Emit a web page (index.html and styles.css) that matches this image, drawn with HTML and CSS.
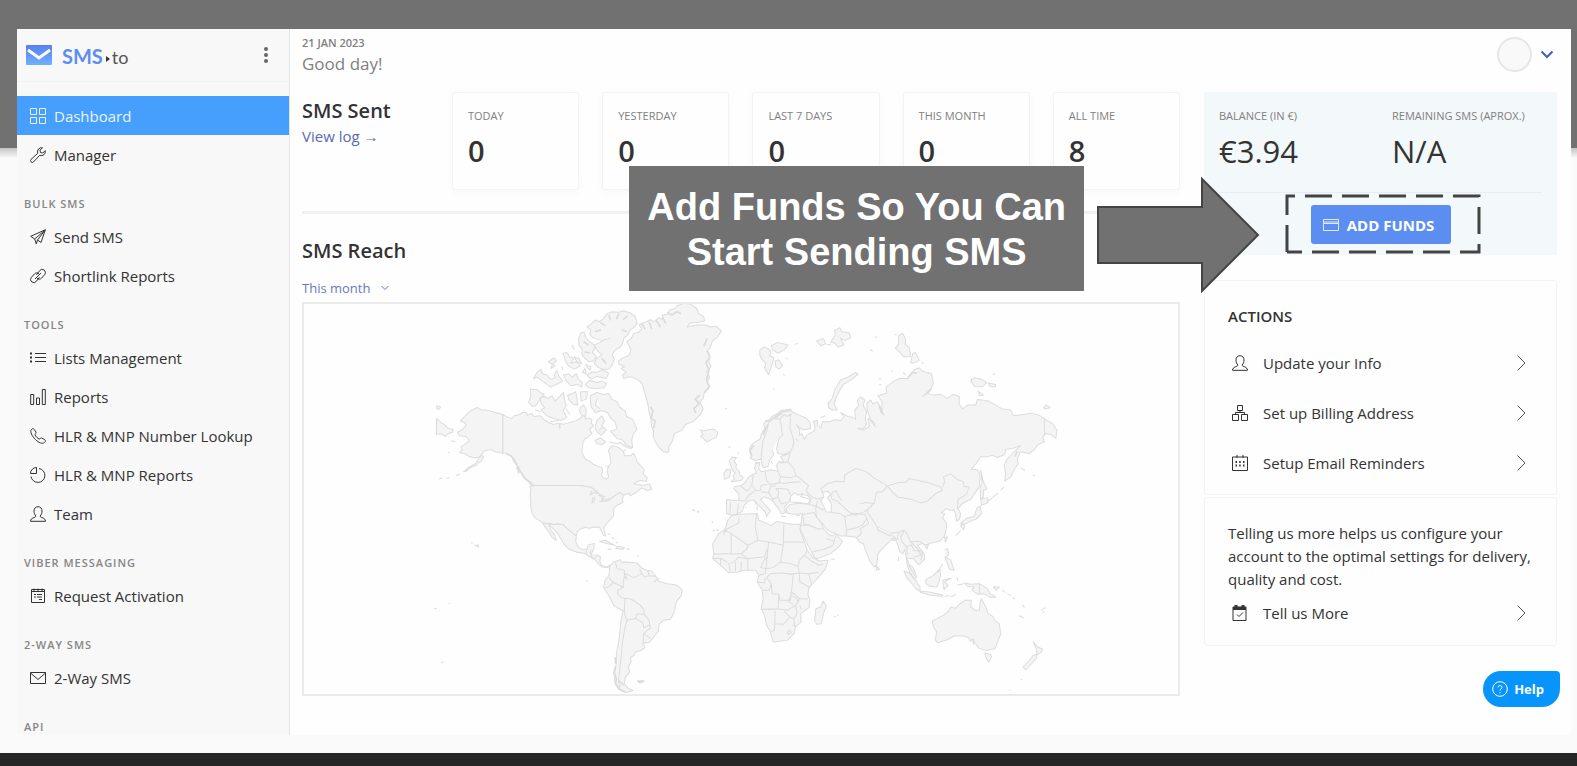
FILE: index.html
```html
<!DOCTYPE html>
<html lang="en">
<head>
	<title>SMS.to Dashboard</title>
	<meta charset="utf-8">
	<link rel="stylesheet" href="styles.css">
</head>
<body>
<div class="app">
	<aside class="sidebar">
		<div class="brand">
			<svg class="brand-mark" viewBox="0 0 26 20">
				<defs><linearGradient id="mark" x1="0" y1="0" x2="0" y2="1"><stop offset="0" stop-color="#5480f0"/><stop offset="1" stop-color="#6fb0fb"/></linearGradient></defs>
				<rect width="26" height="20" rx="1" fill="url(#mark)"/>
				<path d="M2 5l11 8 11-8" fill="none" stroke="#fff" stroke-width="3"/>
			</svg>
			<span class="brand-sms">SMS</span><svg class="brand-dot" viewBox="0 0 4 6"><path d="M0 0l4 3-4 3z"/></svg><span class="brand-to">to</span>
			<button class="dots" aria-label="Menu"><svg viewBox="0 0 4 16"><circle cx="2" cy="2" r="2"/><circle cx="2" cy="8" r="2"/><circle cx="2" cy="14" r="2"/></svg></button>
		</div>
		<nav class="nav">
			<a href="#" class="active"><svg class="icon" viewBox="0 0 16 16"><path d="M.5.5h6v6h-6zM9.500.5h6v6h-6zM.5 9.500h6v6h-6zM9.500 9.500h6v6h-6z"/></svg>Dashboard</a>
			<a href="#"><svg class="icon" viewBox="0 0 16 16"><path d="M12.500.8a4 4 0 0 0-4.700 5.400L1 12.400a1.700 1.700 0 0 0 2.500 2.500L9.700 8.300a4 4 0 0 0 5.500-4.700L12.800 6l-2.300-.5L10 3.200z"/></svg>Manager</a>
			<h3>BULK SMS</h3>
			<a href="#"><svg class="icon" viewBox="0 0 16 16"><path d="M15.300.8L.7 7.300l4 2.700L15.300.8 11 13.500 7.500 11l-1.200 4-1.600-5M15.300.8L7.500 11"/></svg>Send SMS</a>
			<a href="#"><svg class="icon" viewBox="0 0 16 16"><path d="M6.500 6.800l3.200-4.200a3.200 3.200 0 0 1 5 4l-3.200 3.500a3 3 0 0 1-4.500 0M9.500 9.200l-3.200 4.200a3.200 3.200 0 0 1-5-4l3.200-3.500a3 3 0 0 1 4.500 0M5 11l6-6"/></svg>Shortlink Reports</a>
			<h3>TOOLS</h3>
			<a href="#"><svg class="icon" viewBox="0 0 16 16"><path d="M5 3.500h11M5 7.500h11M5 11.500h11"/><path d="M0 3.500h2M0 7.500h2M0 11.500h2" stroke-width="2"/></svg>Lists Management</a>
			<a href="#"><svg class="icon" viewBox="0 0 16 16"><path d="M.7 5.500h3v10h-3zM6.500 9h3v6.500h-3zM12.300.5h3v15h-3z"/></svg>Reports</a>
			<a href="#"><svg class="icon" viewBox="0 0 16 16"><path d="M1.500 1.500C2.500.3 3.500.3 4.300 1.500L6 4.200C6.500 5.200 4.800 6 5 6.800c.5 1.500 2.700 3.700 4.200 4.200.8.200 1.600-1.500 2.600-1l3 1.700c1 .8.800 1.800-.4 2.800-2 1.800-5.600.3-9-3S-.3 3.500 1.500 1.500z"/></svg>HLR &amp; MNP Number Lookup</a>
			<a href="#"><svg class="icon" viewBox="0 0 16 16"><path d="M9 1.500a7 7 0 1 1-8 8M6.500.5v6h-6a6 6 0 0 1 6-6z"/></svg>HLR &amp; MNP Reports</a>
			<a href="#"><svg class="icon" viewBox="0 0 16 16"><path d="M6 10c-1.500-1.200-2-3-2-5 0-2.500 1.500-4.300 4-4.300S12 2.500 12 5c0 2-.5 3.800-2 5 .5 2 5.500 1.500 5.500 5.300H.5C.5 11.500 5.500 12 6 10z"/></svg>Team</a>
			<h3>VIBER MESSAGING</h3>
			<a href="#"><svg class="icon" viewBox="0 0 16 16"><path d="M1.500 1.500h13v13h-13zM1.500 3.500h13M4 .5v3M8 .5v3M12 .5v3M4 6.500h2M7 6.500h5M4 9h2M7 9h5M9 11.500h3"/></svg>Request Activation</a>
			<h3>2-WAY SMS</h3>
			<a href="#"><svg class="icon" viewBox="0 0 16 16"><path d="M.5 2.500h15v11H.5zM.5 3L8 9.500 15.500 3"/></svg>2-Way SMS</a>
			<h3>API</h3>
		</nav>
	</aside>

	<main class="main">
		<header class="topbar">
			<div>
				<div class="date">21 JAN 2023</div>
				<div class="greeting">Good day!</div>
			</div>
			<button class="profile" aria-label="Account"><span class="avatar"></span><svg viewBox="0 0 14 9"><path d="M1.500 1.500L7 7l5.500-5.500"/></svg></button>
		</header>

		<div class="columns">
			<section class="left">
				<div class="stats">
					<div class="stats-title">
						<h2>SMS Sent</h2>
						<a href="#">View log →</a>
					</div>
					<div class="cards">
						<div class="card"><span>TODAY</span><b>0</b></div>
						<div class="card"><span>YESTERDAY</span><b>0</b></div>
						<div class="card"><span>LAST 7 DAYS</span><b>0</b></div>
						<div class="card"><span>THIS MONTH</span><b>0</b></div>
						<div class="card"><span>ALL TIME</span><b>8</b></div>
					</div>
				</div>

				<h2 class="reach">SMS Reach</h2>
				<div class="period">
					<select aria-label="Period"><option>This month</option></select>
					<svg viewBox="0 0 8 6"><path d="M.5 1L4 4.500 7.500 1"/></svg>
				</div>

				<div class="map">
					<svg viewBox="-348 27 2619 1170">
						<!-- North America, Greenland -->
						<g>
							<path d="M248 358L225 352 200 345 185 345 170 337 150 348 135 362 120 377 133 382 138 390 128 402 112 412 118 422 136 424 142 430 148 436 134 448 122 455 126 464 118 472 135 476 148 484 160 488 176 486 185 478 190 468 200 465 212 463 225 470 248 474z"/>
							<path d="M185 480L190 486 182 500 175 502 168 510 150 518 138 528 130 530 146 516 165 506 176 490zM120 536l-12 5M88 548l-9 1M66 549l-9 2M50 332l12 4-6 7-6-3zM49 370L60 380 74 390 84 400 100 402 96 412 84 415 76 424 62 416 49 418zM92 437l12 3M84 472l5-1"/>
							<path d="M248 358L262 366 275 370 282 362 300 358 306 352 318 352 322 360 335 355 340 364 360 362 372 374 385 382 400 388 414 384 430 387 450 382 470 375 480 370 490 360 497 372 506 368 515 374 512 384 520 392 508 402 515 415 500 428 492 432 488 445 484 470 495 492 508 498 520 508 545 518 547 530 543 540 550 550 558 552 565 545 560 528 565 512 572 505 568 480 564 465 575 452 590 455 600 460 610 470 612 482 628 482 640 475 646 488 650 500 662 512 672 525 668 535 680 548 678 558 660 556 640 565 650 568 670 570 688 566 694 582 680 586 664 578 650 590 630 602 626 594 610 600 598 592 570 610 545 618 550 605 535 596 530 590 515 578 500 574 480 571 343 571 332 560 320 555 310 540 300 530 295 515 280 500 275 485 260 475 248 474z"/>
							<path class="coast" d="M258 476L272 482 284 496 292 512 300 528 312 548 326 560 338 575M290 515l6 20M418 384v16M508 575l12 14 14 6"/>
							<path d="M343 571H480L500 574 515 578 522 586 535 596 552 604 545 618 570 610 598 592 610 600 606 612 608 622 590 630 578 642 580 660 572 672 560 683 552 694 551 704 556 722 549 720 542 705 538 696 520 695 508 699 495 697 478 702 470 710 468 722 455 712 440 700 428 688 414 686 400 688 385 684 368 683 345 668 336 655 332 640 330 600 332 585 330 574z"/>
							<path d="M514 586l-4 14 10-8 12 4M518 605l-3 18 5-2 4-16M534 600l12 4-2 14-8 2M552 620l20-6"/>
							<path d="M740 472L730 470 720 462 712 452 705 440 698 425 700 410 694 395 690 365 686 350 683 330 678 310 672 290 666 268 655 255 640 248 630 245 610 250 606 240 618 232 602 220 612 215 596 208 594 198 605 190 625 182 632 165 620 140 632 132 640 115 655 112 664 102 656 90 672 82 690 74 700 80 716 68 728 74 726 60 742 58 748 44 762 42 770 32 790 25 812 28 830 42 834 56 850 65 852 78 835 82 808 84 800 96 830 90 856 90 870 96 888 94 903 108 892 124 876 138 868 160 858 168 868 180 865 200 872 215 858 230 868 246 860 262 866 278 852 290 848 310 838 320 848 340 840 358 820 378 795 388 785 405 762 415 755 440 745 455 745 470z"/>
							<path class="coast" d="M664 86l10 16M686 80l8 22M706 74l14 22M726 66l10 20M740 52l14 8 16-10 12 6M862 168l6 20-12 16 10 20-8 30 8 20-14 20M838 300l-14 12 12 14-16 14 6 14M690 335l8 12-6 22 12 8-4 22M860 130l-10 24"/>
							<path d="M500 95L512 88 525 75 538 80 550 70 560 56 575 50 595 52 610 47 630 54 645 65 650 85 640 98 630 104 622 120 610 130 606 148 600 155 584 166 575 180 582 192 576 208 568 220 552 224 535 218 522 206 528 190 545 180 530 165 520 150 535 145 550 135 570 130 545 136 520 130 508 118 512 106z"/>
							<path d="M475 130L482 114 492 112 496 126 506 138 520 148 524 160 516 172 528 184 520 198 505 200 492 188 484 176 486 162 476 152z"/>
							<path class="coast" d="M540 82l14 10M566 60l4 16M596 56l-8 16M622 62l-14 12M620 110l-16-6M524 110l18-6M490 140l14 10M492 170l16 4M544 190l14 16"/>
							<path d="M495 268L508 256 530 262 545 258 558 266 552 278 525 280 505 278zM500 240L515 230 530 232 545 224 565 234 558 250 530 244 512 252zM428 175L440 172 448 186 460 190 452 204 468 200 480 212 462 222 446 214 436 200 432 186zM384 200L402 188 408 198 398 206 404 214 392 220 396 208zM340 250L350 232 362 222 366 236 380 240 390 252 404 250 402 238 410 226 416 244 428 258 412 266 392 276 372 262 350 246zM430 240L446 236 456 246 468 236 474 252 486 262 484 276 470 268 452 272 438 258zM455 150l7 14M462 186l14 4 8 16-14-6zM424 214l4 10M486 232l8-12 4 18zM496 208l16 6-4 12z"/>
							<path d="M330 282L350 284 360 292 372 298 358 314 346 332 336 334 325 322 332 302zM358 310L372 304 385 310 394 302 405 318 416 306 430 292 432 312 438 332 428 346 440 366 424 376 400 370 380 362 362 344 374 338 364 328zM442 300L456 296 466 290 470 308 472 330 460 328 446 314zM480 290L502 290 498 312 482 318zM480 336l10-6 8 14-2 20-12-4-6-12zM345 344l16 6M388 380l28-4M436 340l14 18"/>
							<path d="M510 302L530 292 548 298 565 295 574 312 590 320 598 336 615 348 618 364 636 372 650 402 638 418 634 436 637 458 620 452 606 434 590 430 570 408 590 402 584 380 570 368 562 352 545 346 525 352 512 335zM530 310l-4 20 14 12M524 400L530 376 545 362 552 378 544 392 558 404 542 420 532 412zM524 436L540 428 556 440 545 448 530 446zM568 440l20 6 12-4 22 16 12 2M608 470l8-8M556 512l6 2M548 396l-12 10"/>
							<path d="M840 404L850 408 862 404 880 402 892 412 888 426 876 432 860 440 850 432 840 424 848 418zM914 342l6-3M924 454l5 3M934 486L948 487 940 498 948 508 946 518 956 528 958 540 968 546 962 556 946 558 932 560 942 550 938 542 944 532 936 526 930 508 926 498zM910 534L918 522 930 524 928 545 912 552zM952 472l2 5"/>
						</g>
						<!-- Europe and Asia -->
						<g transform="translate(960)">
							<path d="M30 490L34 478 27 462 32 450 45 440 60 430 62 416 72 402 70 384 84 376 95 364 110 356 120 346 135 344 150 342 155 350 175 360 195 368 208 380 210 400 190 404 176 398 168 388 178 405 176 420 184 416 192 432 200 420 212 412 220 408 224 398 218 378 232 376 230 390 242 398 245 380 265 380 285 374 300 376 310 364 300 352 322 364 335 366 345 372 342 345 354 332 350 316 360 305 372 315 368 330 378 350 374 368 378 388 366 404 352 400 372 402 386 394 382 370 398 380 404 394 390 376 380 345 378 325 390 315 396 326 410 320 422 340 420 352 430 360 424 346 424 320 412 302 438 294 436 276 445 270 460 258 475 250 500 250 514 236 520 225 535 218 545 228 572 236 578 265 570 284 545 304 560 294 576 300 600 298 620 310 638 298 656 304 655 325 665 342 680 330 705 330 710 313 740 317 765 330 785 342 810 345 818 362 850 358 870 354 895 360 912 372 935 385 948 405 945 430 930 418 914 416 905 425 910 440 890 450 880 464 865 475 838 470 830 490 832 506 822 520 810 545 792 558 794 535 790 510 800 490 812 478 826 464 838 452 815 460 795 462 792 478 770 487 755 480 740 485 720 485 706 505 692 522 708 524 715 530 718 550 715 575 690 612 665 625 652 640 660 656 656 672 648 678 644 655 640 644 628 645 615 640 602 652 612 656 605 668 618 684 616 705 610 725 595 738 565 745 556 752 545 745 530 750 550 775 552 792 535 808 528 802 518 790 506 790 498 786 504 806 518 818 528 845 520 850 508 832 500 812 498 795 492 762 486 776 478 770 470 745 465 735 450 735 430 755 412 775 408 810 400 815 388 798 378 775 368 745 358 742 345 725 318 722 300 722 285 715 270 710 258 702 248 688 240 680 250 702 262 716 275 722 285 716 305 738 295 755 270 775 225 792 215 775 200 745 185 715 178 700 180 690 183 672 185 655 165 658 140 654 136 640 148 628 175 624 205 627 212 612 200 600 178 598 165 602 150 606 145 620 130 638 136 652 122 656 114 640 100 620 85 610 70 605 60 612 78 634 90 646 78 664 74 650 50 626 38 614 22 618 10 632 6 648 -10 656 -25 660 -42 655 -42 613 -22 616 -5 615 -5 596 -20 580 -16 574 0 572 15 562 22 548 36 538 48 534 42 518 48 502 58 502 54 520 62 530 90 524 112 528 108 512 114 500 130 500 120 484 148 476 160 445 150 470 130 478 112 474 108 462 115 430 128 418 118 412 108 430 92 448 94 465 100 478 88 494 82 514 68 518 62 492 45 496z"/>
							<path class="coast" d="M34 484l-6-18 12-16M68 420l8-22 20-26 30-22 24-4M74 378l22-4 28-20M500 250l14-18 14 2M560 294l10-12M830 468l-8 16M415 330l8 22"/>
							<path d="M66 515L62 490 66 440 78 410 85 380 100 370 118 372 122 388 124 412M118 372L130 358 140 364 152 356M150 370L148 400 158 430 160 445M152 356l-4 14M148 476L142 500 160 520 166 542 180 550 204 572 196 588M142 500L118 504M112 528L120 545 116 562 90 570 78 556 74 530M120 545L150 548 166 542M116 562L130 565 150 562 180 560M38 540L34 570 46 586 60 585 62 570 80 568M0 572L20 588 34 570M-5 615L14 618 24 600 46 586M62 590L84 592 90 575 106 572M84 592L96 612 112 606 114 588 106 580 120 580 142 582 150 600M112 606l10 20 16-4M96 612l6 14 14 14M-10 656L-6 625M-30 622l-2 34"/>
							<path d="M196 588L214 605 232 612 248 606M250 600L240 580 262 565 285 558 310 560 312 540 345 520 378 530 400 548 440 572 425 590 408 590 400 625 375 622 350 628 335 640 310 625 292 600 288 588 275 590 272 610M440 572L475 562 495 562 505 550 560 562 600 575 605 585 585 595 560 618 540 623 510 612 470 605 455 590zM605 575L612 560 608 545 630 536 648 552 668 560 670 575 685 575 678 595 665 605 652 612 650 640M400 625L382 638 380 650 392 668 410 695 450 714 478 710 490 705 500 718 510 740 535 738 548 745"/>
							<path d="M272 610L290 618 325 650 345 660 370 650 395 632M270 650L300 656 312 664 345 655 375 658 378 670 365 690 345 698 318 704 312 664M318 704L316 722M378 670L384 685 360 700 362 715 350 726M186 658L220 652 228 665 240 680M230 618L225 640 228 665M205 627L228 634 250 645M186 658L190 685 205 690 235 702 245 700M182 690L205 690M215 770L250 762 278 750 280 738 258 730M280 738l5-16M410 695L412 705 450 722 452 714M450 730L470 732 474 712M455 720l12 14M490 705L480 725 484 740 498 755 500 780M498 755L512 748 520 765 535 768 540 780 520 785M510 740L525 755 545 775 540 795M910 372L912 420"/>
							<path class="sea" d="M246 592L262 588 270 598 260 608 272 625 272 650 256 650 250 634 240 616 250 606zM150 604L162 592 172 600 186 594 180 604 208 612 204 626 176 622 150 620z"/>
							<path d="M265 338L262 325 275 310 282 285 300 255 325 245 345 232 352 238 330 256 308 268 296 288 288 305 280 325 290 345 275 345zM58 165L70 156 82 160 92 172 86 182 100 188 96 205 84 238 72 218 76 206 64 192 58 180zM92 152L112 142 142 150 130 166 112 174 96 164zM104 198l10-4 12 18-10 10-10-6zM162 148l10-3M136 188l5 4M128 238l4 4M98 282h4M228 138L248 130 255 146 240 152zM270 142L284 120 282 106 298 98 304 110 326 114 330 130 312 136 300 130 310 150 294 156 282 144zM258 148l14 2M402 127l8-1M388 164l8 4M462 118l6 2M474 122L486 115 494 130 494 148 506 158 510 184 490 186 476 170 464 160 474 148zM510 204L516 176 524 172 536 196 524 202zM452 226l4 4M414 252l8 0M416 268l6 2M488 232l6 8M544 202l4 5M690 258L700 248 720 252 738 262 724 275 702 274zM742 264L765 268 764 275 748 274zM712 288L728 300 716 302zM692 250v14M756 238l6-2M908 338L916 330 928 337 914 342zM840 518l12 8M876 540l6 2M240 368l14-6M42 502l12 2M92 498l4 8M166 432l6 4"/>
							<path d="M720 525L728 560 738 580 728 585 728 605 720 612 718 580 724 560zM720 612L740 608 742 622 722 630zM718 632L722 655 708 670 686 680 664 690 660 684 676 670 700 664 708 640zM664 682l8 12-4 10-8-12zM742 618l30-24M780 585l10-10M660 705l-14 16M46 618v10M50 632v14M14 636h4M122 664h14M168 662l10-2"/>
						</g>
						<!-- Latin America -->
						<g transform="translate(0 585)">
							<path d="M368 98L385 101 400 103 414 101 428 103 440 115 455 127 468 137 466 155 475 172 488 178 500 177 504 164 522 160 520 176 512 194 530 194 541 200 538 214 545 226 560 230 570 224 572 234 560 232 545 230 535 222 524 208 508 200 495 190 470 186 445 176 430 160 425 150 410 127 396 112 386 104 392 120 404 136 408 150 396 142 384 122 374 110z"/>
							<path d="M498 180l2 12M512 178l-2 14M512 194l6 12 14-10M538 154L556 150 570 158 585 166 560 160zM590 168L612 172 606 178 586 174zM618 177l10-1M562 177h12M562 130l8 4M576 140l4 8M652 194l3 4M586 156l6 2M152 157l5 2M164 164l12 6-4-8M498 270l4 3M42 354l8 1M86 338l3 2M64 518l6-4"/>
							<path d="M568 228L580 215 600 208 604 216 620 215 650 218 665 234 680 240 695 243 706 258 714 272 740 280 768 284 785 298 783 315 768 334 762 365 750 387 730 390 716 401 714 422 695 446 685 457 668 456 674 472 660 481 645 484 642 494 630 502 632 515 624 528 628 545 615 560 612 580 622 593 638 600 618 606 595 597 584 580 580 545 588 520 588 490 596 450 602 390 608 362 580 345 565 315 550 292 554 270 566 255z"/>
							<path d="M585 217L590 235 612 240 612 258 618 266 616 250 640 262 664 250 658 236M664 250l8 10 14-4-4-16M686 256l20 2M700 275l16-12M612 258L608 280 610 290 592 300 592 312 605 322 614 324 632 326 660 345 670 358 672 372 650 370 646 384 620 390 614 375 612 358 608 362M614 324L612 358M554 292L565 290 578 276 566 262M578 276L608 290M646 384L668 398 670 412 688 404 686 390 672 372M688 404L690 412 670 430 668 456M670 430L690 444M620 390L612 420 606 460 602 500 598 540 594 575 600 590"/>
							<path class="coast" d="M586 530l-4 16 6 20-2 14 14 18 14 6M594 570l16 14M584 500l2 20M652 572l8 5 10-5zM816 58l6 4M830 64l6 0M874 95h3M878 120l4 2M888 120h6"/>
						</g>
						<!-- Africa, Oceania -->
						<g transform="translate(960 585)">
							<path d="M-25 75L0 72 50 70 55 90 75 98 90 106 108 94 125 97 155 102 180 102 178 118 190 150 200 180 215 200 235 212 262 210 255 235 230 265 205 292 202 312 208 330 205 352 180 370 182 395 165 408 160 430 140 450 98 455 90 425 78 405 72 375 62 355 68 325 65 300 50 275 55 255 45 240 10 240 -10 245 -35 247 -60 225 -83 205 -80 190 -84 162 -65 130 -45 115 -38 90z"/>
							<path d="M-5 82L-5 98 -48 120 -28 130 -28 190 -80 192M-48 120L-50 134M-28 130L22 165 20 175 2 190 -28 192M22 165L52 150 44 110 48 72M52 150L84 155 128 165 130 100M128 155H190M84 155L80 200 76 235 60 232 72 208 80 200M2 190L22 205 72 200 80 176M22 205V240M-20 215L-5 200 18 206M-20 215L-35 220 -30 244M-15 216V242M2 214V240M-60 205L-60 225M-83 205L-60 204 -40 215M128 165L120 215 98 232 76 235 74 250 52 255M120 215L150 220 172 228 176 248 150 252 125 248 90 250 78 262M172 228L178 208 192 195 212 212 235 225 248 222M192 195L200 180M176 248L205 250 235 245M176 248L178 275 208 292M205 250L212 280M125 248L158 252 155 285 152 305 178 325 202 325M78 262L92 280 86 300 66 300M52 275L72 278 74 262M92 280L95 310 115 312 118 330 150 330 152 305M115 312L112 355 64 357M112 355L140 360 165 345 178 325M64 357H104M104 362L102 420 90 425M104 400L128 402 148 380 130 362M148 380L160 385 162 408M165 345L170 370 160 385M152 315L170 325 172 340M148 320l-4 14 14 8M178 345l4 12M158 404l10 6M140 425l8-6 4 8-8 6z"/>
							<path d="M248 332L257 348 250 365 242 400 228 402 222 390 226 355 240 350zM280 380l5-2M290 375l5-1M272 206l10 1M406 226L416 236 408 240zM473 200v12M490 242L505 248 525 270 538 290 538 302 526 296 510 275 498 262zM504 224l8 14 12 20M538 302L570 306 606 314 604 318 566 314 540 306zM612 318l14-2M630 320l16-8M555 268L575 258 595 238 600 250 596 272 588 290 568 288 556 280zM606 270L630 264 612 275 622 285 610 298zM648 260l4 14M650 284l20-4M672 278L690 282 716 280 740 295 748 310 764 320 750 322 730 310 712 312 694 300 700 290 680 288zM716 280v32M758 290L776 290 766 300zM784 300l10 6M800 310l12 6M814 322l8 4M845 344l6 8M834 376l14 6M900 360l14-8M904 366l6-2M612 178L620 175 624 190 616 202 630 208 636 228 640 240 626 236 620 220 612 200M606 222l-10 14M590 245l12-8M552 164l12-2-6 14zM612 142l8-2-6 16z"/>
							<path d="M575 392L590 384 610 374 622 364 630 350 645 354 655 342 672 330 692 330 690 350 706 362 716 358 718 338 722 325 735 350 742 370 756 378 762 390 775 400 780 430 770 456 762 475 735 480 715 474 704 460 698 452 688 452 684 442 670 437 640 437 620 448 590 457 584 448 588 425 578 410zM690 446l10 2-2 14M732 488L750 492 752 500 744 515 736 504zM878 455L890 470 905 476 900 486 888 494 888 480zM886 492L888 502 872 520 856 538 846 530 862 514 876 496zM840 566l4 2M806 600h3"/>
						</g>
					</svg>
				</div>

				<div class="callout">Add Funds So You Can<br>Start Sending SMS</div>
			</section>

			<section class="right">
				<div class="balance">
					<div class="balance-row">
						<div><span>BALANCE (IN €)</span><b>€3.94</b></div>
						<div><span>REMAINING SMS <small>(APROX.)</small></span><b>N/A</b></div>
					</div>
					<button class="add-funds"><svg viewBox="0 0 16 12"><path d="M.5.5h15v11H.5zM.5 3h15M.5 4.500h15"/></svg>ADD FUNDS</button>
					<svg class="dashes" viewBox="0 0 196 60"><path d="M2 58V2H194V58H2"/></svg>
					<svg class="arrow" viewBox="0 0 164 117"><path d="M2 31H106V3L162 59 106 115V87H2z"/></svg>
				</div>

				<div class="panel actions">
					<h4>ACTIONS</h4>
					<a href="#"><svg class="icon" viewBox="0 0 16 16"><path d="M6 10c-1.500-1.200-2-3-2-5 0-2.500 1.500-4.300 4-4.300S12 2.500 12 5c0 2-.5 3.800-2 5 .5 2 5.500 1.500 5.500 5.300H.5C.5 11.500 5.500 12 6 10z"/></svg>Update your Info<svg class="go" viewBox="0 0 9 16"><path d="M.5.5L8 8 .5 15.500"/></svg></a>
					<a href="#"><svg class="icon" viewBox="0 0 16 16"><path d="M5.500.5h5v5h-5zM.5 9.500h6v6h-6zM9.500 9.500h6v6h-6zM8 5.500v2M3.500 9.500v-2h9v2"/></svg>Set up Billing Address<svg class="go" viewBox="0 0 9 16"><path d="M.5.5L8 8 .5 15.500"/></svg></a>
					<a href="#"><svg class="icon" viewBox="0 0 16 16"><path d="M.5 2h15v13.500H.5zM5 0v3M11 0v3"/><path d="M3.500 7h1.500M7.200 7h1.500M11 7h1.500M3.500 10.500h1.500M7.200 10.500h1.500M11 10.500h1.500" stroke-width="2"/></svg>Setup Email Reminders<svg class="go" viewBox="0 0 9 16"><path d="M.5.5L8 8 .5 15.500"/></svg></a>
				</div>
				<div class="panel more">
					<p>Telling us more helps us configure your account to the optimal settings for delivery, quality and cost.</p>
					<a href="#"><svg class="icon" viewBox="0 0 16 16"><path d="M1 2h13v13.500H1z"/><path d="M1 3.500h13" stroke-width="3"/><path d="M4 0v2M11 0v2" stroke-width="3"/><path d="M5 9.500l2 2 4-4"/></svg>Tell us More<svg class="go" viewBox="0 0 9 16"><path d="M.5.5L8 8 .5 15.500"/></svg></a>
				</div>
			</section>
		</div>
		<button class="help"><svg viewBox="0 0 16 16"><circle cx="8" cy="8" r="7.300"/><path d="M6 6.500C6 3.800 10 4 10 6.300 10 8 8 7.800 8 9.500M8 11v1.200"/></svg>Help</button>
	</main>
</div>
<div class="bottom"></div>
</body>
</html>
```
FILE: styles.css
```css
*{
	box-sizing: border-box;
}
body{
	margin: 0;
	min-height: 100vh;
	display: flex;
	flex-direction: column;
	font-family: "Open Sans", "Noto Sans", sans-serif;
	font-size: 15px;
	color: #333;
	background: linear-gradient(#717171 148px, #c4c4c4 148px, #fafafa 158px);
}
h2, h3, h4, p{
	margin: 0;
}
a{
	text-decoration: none;
	color: inherit;
}
button{
	border: 0;
	padding: 0;
	background: none;
	font-family: inherit;
	cursor: pointer;
}
svg{
	fill: none;
	flex: none;
}
.app{
	flex: 1;
	display: flex;
	margin: 29px 6px 18px 17px;
	background: #fefefe;
}
.bottom{
	height: 13px;
	background: #262626;
}

/* sidebar */
.sidebar{
	width: 273px;
	flex: none;
	background: #f8f8f8;
	border-right: 1px solid #e4e4e4;
}
.brand{
	display: flex;
	align-items: center;
	height: 53px;
	padding: 0 21px 0 9px;
	border-bottom: 1px solid #f2f2f2;
}
.brand-mark{
	width: 26px;
	height: 20px;
	margin-right: 10px;
}
.brand-sms{
	font: 700 20px Lato, sans-serif;
	color: #5c8ef2;
	padding-top: 2px;
}
.brand-dot{
	width: 4px;
	height: 6px;
	margin: 8px 2px 0 3px;
	fill: #333;
}
.brand-to{
	font: 18px Lato, sans-serif;
	color: #555;
	padding-top: 3px;
}
.dots{
	margin-left: auto;
	height: 16px;
}
.dots svg{
	display: block;
	width: 4px;
	height: 16px;
	fill: #666;
}
.nav{
	padding-top: 14px;
}
.nav a{
	display: flex;
	align-items: center;
	gap: 8px;
	height: 39px;
	padding-left: 13px;
}
.nav a.active{
	background: #469ffd;
	color: #e9f4ff;
}
.nav h3{
	height: 43px;
	padding: 21px 0 4px 7px;
	font-size: 11px;
	font-weight: 600;
	line-height: 18px;
	letter-spacing: 1px;
	color: #868686;
}
.nav h3:last-child{
	height: 38px;
	padding-bottom: 0;
}
.icon{
	width: 16px;
	height: 16px;
	stroke: currentColor;
}

/* top */
.main{
	flex: 1;
	min-width: 0;
	position: relative;
	padding: 0 14px 0 12px;
}
.topbar{
	display: flex;
	justify-content: space-between;
	height: 63px;
	padding-top: 6px;
}
.date{
	font-size: 11px;
	font-weight: 600;
	line-height: 16px;
	color: #808080;
}
.greeting{
	font-size: 17px;
	line-height: 26px;
	color: #808080;
}
.profile{
	display: flex;
	align-items: center;
	gap: 8px;
	height: 38px;
	margin-right: 3px;
}
.avatar{
	width: 35px;
	height: 35px;
	border: 2px solid #e6e6e6;
	border-radius: 50%;
	background: #f9f9f9;
}
.profile svg{
	width: 14px;
	height: 9px;
	stroke: #4a5db4;
	stroke-width: 2;
}

/* columns */
.columns{
	display: grid;
	grid-template-columns: minmax(0, 1fr) 353px;
	gap: 24px;
}
.left{
	position: relative;
}
.stats{
	display: flex;
	height: 122px;
	border-bottom: 3px solid #f1f1f1;
}
.stats-title{
	width: 150px;
	flex: none;
	padding-top: 6px;
}
h2{
	font-size: 20px;
	font-weight: 600;
	line-height: 26px;
}
.stats-title a{
	line-height: 24px;
	color: #5a68b5;
}
.cards{
	flex: 1;
	display: grid;
	grid-template-columns: repeat(5, 1fr);
	gap: 23px;
	height: 97px;
}
.card{
	padding: 13px 15px;
	border: 1px solid #f3f3f3;
	border-radius: 3px;
	box-shadow: 0 2px 10px rgba(0,0,0,0.03);
	white-space: nowrap;
}
.card span, .balance-row span{
	display: block;
	font-size: 11px;
	line-height: 20px;
	color: #808080;
}
.card b, .balance-row b{
	display: block;
	font-size: 29px;
	font-weight: 600;
	line-height: 50px;
}
.reach{
	padding-top: 24px;
}
.period{
	display: flex;
	align-items: center;
	gap: 10px;
	height: 38px;
	padding-top: 10px;
}
.period select{
	appearance: none;
	border: 0;
	padding: 0;
	background: none;
	font-family: inherit;
	font-size: 13px;
	color: #6b77bd;
}
.period svg{
	width: 8px;
	height: 6px;
	stroke: #6b77bd;
}
.map{
	border: 2px solid #ebebeb;
}
.map svg{
	display: block;
	width: 100%;
	fill: #f4f4f4;
	stroke: #dcdcdc;
	stroke-width: 3;
	stroke-linejoin: round;
}
.map .coast{
	fill: none;
	stroke-width: 5;
}
.map .sea{
	fill: #fefefe;
}

/* tip over the cards */
.callout{
	position: absolute;
	top: 74px;
	right: 96px;
	padding: 19px 18px 16px;
	background: #717171;
	color: #fff;
	font: bold 38px/45px "Liberation Sans", Arial, sans-serif;
	text-align: center;
	white-space: nowrap;
}

/* right side */
.balance{
	position: relative;
	height: 163px;
	background: #f3f8fb;
}
.balance-row{
	display: flex;
	height: 101px;
	margin: 0 15px;
	padding-top: 14px;
	border-bottom: 1px solid #e6eef2;
	white-space: nowrap;
}
.balance-row div{
	width: 173px;
	flex: none;
}
.balance-row b{
	font-size: 31px;
	font-weight: 500;
}
.balance-row small{
	font-size: 11px;
}
.add-funds{
	display: flex;
	align-items: center;
	justify-content: center;
	gap: 8px;
	width: 140px;
	height: 39px;
	margin: 12px auto 0;
	padding-right: 4px;
	border-radius: 3px;
	background: #5c8ef2;
	color: #fff;
	font-size: 15px;
	font-weight: 700;
}
.add-funds svg{
	width: 16px;
	height: 12px;
	stroke: #dfe9ff;
}
.dashes{
	position: absolute;
	top: 102px;
	left: 81px;
	width: 196px;
	height: 60px;
	stroke: #444;
	stroke-width: 3;
	stroke-dasharray: 27 10;
	pointer-events: none;
}
.arrow{
	position: absolute;
	top: 84px;
	left: -108px;
	width: 164px;
	height: 117px;
	fill: #717171;
	stroke: #444;
	stroke-width: 2;
	z-index: 1;
}
.panel{
	border: 1px solid #f3f3f3;
	border-radius: 3px;
	padding: 0 30px 0 23px;
}
.panel a{
	display: flex;
	align-items: center;
	gap: 15px;
	padding-left: 4px;
}
.panel .go{
	width: 9px;
	height: 16px;
	margin-left: auto;
	stroke: #555;
}
.actions{
	margin-top: 25px;
	height: 215px;
	padding-top: 24px;
}
.actions h4{
	font-size: 15px;
	font-weight: 600;
	line-height: 22px;
	margin-bottom: 11px;
}
.actions a{
	height: 50px;
}
.more{
	margin-top: 2px;
	padding-top: 24px;
	padding-bottom: 10px;
	padding-right: 20px;
}
.more p{
	line-height: 23px;
}
.more a{
	height: 44px;
	padding-right: 10px;
}
.help{
	position: absolute;
	right: 11px;
	bottom: 28px;
	display: flex;
	align-items: center;
	gap: 6px;
	height: 36px;
	padding: 0 16px 0 9px;
	border-radius: 18px 4px 18px 18px;
	background: #0795fb;
	color: #fff;
	font-size: 13px;
	font-weight: 700;
}
.help svg{
	width: 16px;
	height: 16px;
	stroke: #fff;
}
```
